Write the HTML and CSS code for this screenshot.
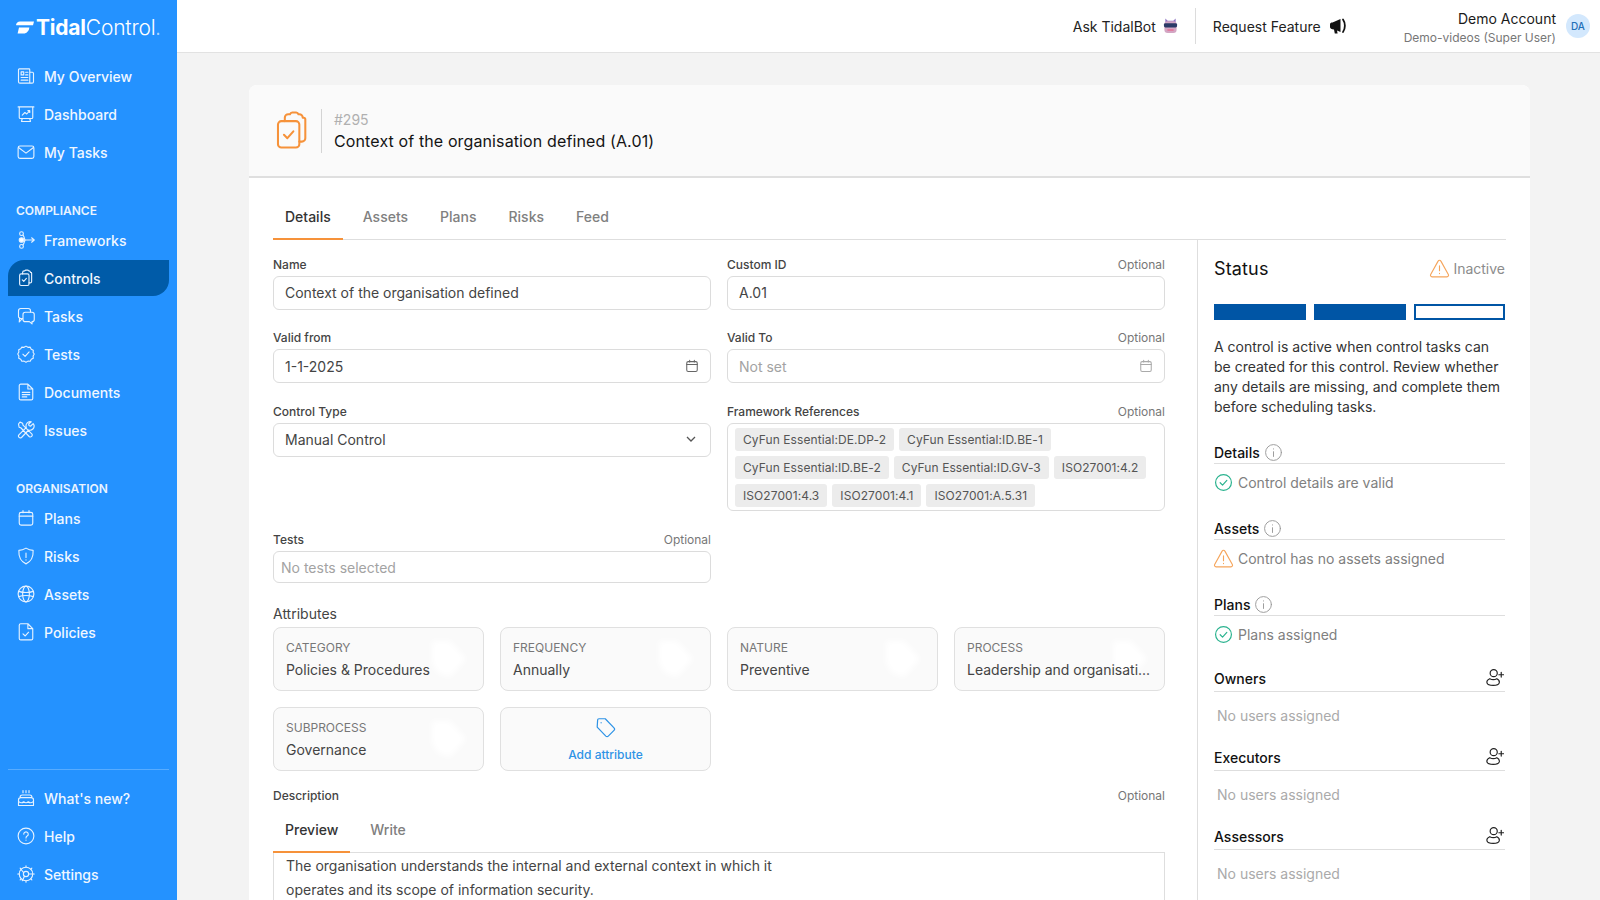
FILE: index.html
```html
<!DOCTYPE html>
<html lang="en">
<head>
    <meta charset="UTF-8">
    <title>Context of the organisation defined</title>
    <link rel="stylesheet" href="styles.css">
</head>
<body>
    <svg class="defs" width="0" height="0">
        <symbol id="i-clip" viewBox="0 0 24 24" fill="none" stroke="currentColor" stroke-linecap="round" stroke-linejoin="round">
            <path d="M7.500 6.500V4.500a2 2 0 0 1 2-2h1a1.600 1.600 0 0 1 1.400-1h2.200a1.600 1.600 0 0 1 1.400 1h.5a2 2 0 0 1 2 2V4.500h.5a1 1 0 0 1 1 1v11a2 2 0 0 1-2 2H16"/>
            <rect x="3.500" y="6.500" width="12.500" height="15.500" rx="2"/>
            <path d="M7 14.500l2 2 3.500-4"/>
        </symbol>
        <symbol id="i-warn" viewBox="0 0 24 24" fill="none" stroke="currentColor" stroke-linecap="round" stroke-linejoin="round">
            <path d="M10.400 3.600L1.900 18.800A1.800 1.800 0 0 0 3.500 21.500h17a1.800 1.800 0 0 0 1.600-2.700L13.600 3.600a1.800 1.800 0 0 0-3.200 0z"/>
            <path d="M12 9v5.500M12 17.600v.2"/>
        </symbol>
        <symbol id="i-ok" viewBox="0 0 24 24" fill="none" stroke="currentColor" stroke-linecap="round" stroke-linejoin="round">
            <circle cx="12" cy="12" r="10"/>
            <path d="M7.800 12.300l3 3 5.400-6"/>
        </symbol>
        <symbol id="i-info" viewBox="0 0 24 24" fill="none" stroke="currentColor" stroke-linecap="round">
            <circle cx="12" cy="12" r="10"/>
            <path d="M12 11v6M12 7.400v.2"/>
        </symbol>
        <symbol id="i-cal" viewBox="0 0 24 24" fill="none" stroke="currentColor" stroke-linecap="round" stroke-linejoin="round">
            <rect x="3" y="4.500" width="18" height="17" rx="2.500"/>
            <path d="M3 9.500h18M8 2v3M16 2v3"/>
        </symbol>
        <symbol id="i-adduser" viewBox="0 0 24 24" fill="none" stroke="currentColor" stroke-linecap="round" stroke-linejoin="round">
            <circle cx="11" cy="6.500" r="4.500"/>
            <path d="M15 13.500c2.600 1.200 3.500 3.200 3 5.300-.6 2.200-3.600 3.200-7.500 3.200s-7.500-1-8-3.200c-.5-2.300 1.100-4.300 3.500-5.300 2.500 1.300 6.500 1.300 9 0z"/>
            <path d="M20.500 5.500v6M17.500 8.500h6"/>
        </symbol>
        <symbol id="i-tag" viewBox="0 0 40 44">
            <path d="M4 4h18l16 18-16 18-12-4-6-10z"/>
        </symbol>
    </svg>

    <div class="app">
        <aside class="sidebar">
            <div class="logo">
                <svg class="logo_mark" viewBox="0 0 18 13" fill="#fff"><path d="M0 4Q.6.800 4 .6h14l-1 3.600H.4zM3 6.400h10.400Q12.800 11 8.600 12.600H1.600z"/></svg>
                <span class="logo_text"><b>Tidal</b>Control<i>.</i></span>
            </div>

            <a class="nav_item">
                <svg class="nav_icon" viewBox="0 0 24 24"><path d="M3 2.500h13a1 1 0 0 1 1 1V21.500H4a2 2 0 0 1-2-2v-16a1 1 0 0 1 1-1zM17 7h3.500a1.500 1.500 0 0 1 1.500 1.500v11a2 2 0 0 1-2 2h-3M5.500 6.500h3.500v4H5.500zM11.500 7h3M11.500 10.500h3M5.500 14h9M5.500 17.500h9"/></svg>
                My Overview
            </a>
            <a class="nav_item">
                <svg class="nav_icon" viewBox="0 0 24 24"><path d="M1.500 2.500h21M3 2.500v14a1.500 1.500 0 0 0 1.500 1.500h15a1.500 1.500 0 0 0 1.500-1.500v-14M7 18l-1 4M17 18l1 4M6 22h12M7 13.500l3.500-3.500 2.500 2 4-4.500M14.500 7.500H17V10"/></svg>
                Dashboard
            </a>
            <a class="nav_item">
                <svg class="nav_icon" viewBox="0 0 24 24"><rect x="1.500" y="4" width="21" height="16.500" rx="2.500"/><path d="M2 6l10 7.500L22 6"/></svg>
                My Tasks
            </a>

            <div class="nav_title">COMPLIANCE</div>
            <a class="nav_item">
                <svg class="nav_icon" viewBox="0 0 24 24"><circle cx="6" cy="3.500" r="2.500"/><circle cx="6" cy="12" r="3" fill="#fff"/><circle cx="6" cy="20.500" r="2.500"/><path d="M8 5.500c2 2.500 1.500 5 3 6.500M8 18.500c2-2.500 1.500-5 3-6.500M9 12h14M19.500 9l3.500 3-3.500 3"/></svg>
                Frameworks
            </a>
            <a class="nav_item active">
                <svg class="nav_icon" viewBox="0 0 24 24"><use href="#i-clip"/></svg>
                Controls
            </a>
            <a class="nav_item">
                <svg class="nav_icon" viewBox="0 0 24 24"><path d="M6 15.500H5a3 3 0 0 1-3-3V5a3 3 0 0 1 3-3h10a3 3 0 0 1 3 3v1.500"/><path d="M3.500 14.500L3 20l4-4.500M11 7h9a3 3 0 0 1 3 3v6.500a3 3 0 0 1-3 3v3l-3.500-3H11a3 3 0 0 1-3-3V10a3 3 0 0 1 3-3z"/></svg>
                Tasks
            </a>
            <a class="nav_item">
                <svg class="nav_icon" viewBox="0 0 24 24"><path d="M12 1.500l2.600 1.600 3-.2 1.400 2.700 2.700 1.400-.2 3L23 12l-1.500 2.600.2 3-2.700 1.400-1.400 2.700-3-.2L12 23l-2.600-1.500-3 .2L5 19l-2.700-1.400.2-3L1 12l1.500-2.600-.2-3L5 5l1.400-2.100 3 .2z"/><path d="M7.800 12.300l3 3 5.400-6"/></svg>
                Tests
            </a>
            <a class="nav_item">
                <svg class="nav_icon" viewBox="0 0 24 24"><path d="M5 1.500h9.500L21 8v12.500a2 2 0 0 1-2 2H5a2 2 0 0 1-2-2v-17a2 2 0 0 1 2-2zM14.500 1.500V8H21M7 12.500h10M7 15.500h10M7 18.500h6"/></svg>
                Documents
            </a>
            <a class="nav_item">
                <svg class="nav_icon" viewBox="0 0 24 24"><path d="M2 4l2-2.500 3.500 1.500.5 2.500L20 17.500a2.600 2.600 0 0 1-3.500 3.500L5 9 2.800 8.300zM21.500 3.500L18 7l-2-1-.5-2 3.500-3a5.500 5.500 0 0 0-6.500 7.500L2.500 18.500a2.500 2.500 0 0 0 3.500 3.500l9.500-10a5.500 5.500 0 0 0 7-7z"/></svg>
                Issues
            </a>

            <div class="nav_title">ORGANISATION</div>
            <a class="nav_item">
                <svg class="nav_icon" viewBox="0 0 24 24"><use href="#i-cal"/></svg>
                Plans
            </a>
            <a class="nav_item">
                <svg class="nav_icon" viewBox="0 0 24 24"><path d="M12 1.500c3 2 6 3 9.500 3 .5 8.500-2 14.500-9.500 18-7.500-3.500-10-9.500-9.500-18 3.500 0 6.500-1 9.500-3zM12 8v6M12 17v.2"/></svg>
                Risks
            </a>
            <a class="nav_item">
                <svg class="nav_icon" viewBox="0 0 24 24"><circle cx="12" cy="12" r="10.500"/><ellipse cx="12" cy="12" rx="4.500" ry="10.500"/><path d="M2.500 8.500c5 2 14 2 19 0M2.500 15.500c5-2 14-2 19 0"/></svg>
                Assets
            </a>
            <a class="nav_item">
                <svg class="nav_icon" viewBox="0 0 24 24"><path d="M5 1h9.500L21 7.500v13a2 2 0 0 1-2 2H5a2 2 0 0 1-2-2V3a2 2 0 0 1 2-2zM14.500 1v6.500H21M8 14.500l3 2.800 4.500-5"/></svg>
                Policies
            </a>

            <div class="sidebar_foot">
                <a class="nav_item">
                    <svg class="nav_icon" viewBox="0 0 24 24"><path d="M2 14.500c0-2 1-3 3-3h14c2 0 3 1 3 3v7.500H2zM4 11.500c0-2 1-3.500 3-3.500h10c2 0 3 1.500 3 3.500M2 16.500c3 2.500 5 2.500 7 .5 1.500 1.500 4.500 1.500 6 0 2 2 4 2 7-.5M8 2v3M12 2v3M16 2v3"/></svg>
                    What's new?
                </a>
                <a class="nav_item">
                    <svg class="nav_icon" viewBox="0 0 24 24"><circle cx="12" cy="12" r="10.500"/><path d="M9 9.500a3 3 0 1 1 4.500 2.600c-1 .6-1.500 1.200-1.500 2.400M12 17.500v.2"/></svg>
                    Help
                </a>
                <a class="nav_item">
                    <svg class="nav_icon" viewBox="0 0 24 24"><circle cx="12" cy="12" r="9"/><circle cx="12" cy="12" r="3.500"/><path d="M12 1v2M12 21v2M1 12h2M21 12h2M4.200 4.200l1.500 1.500M18.300 18.300l1.500 1.500M4.200 19.800l1.500-1.500M18.300 5.700l1.500-1.500M8.700 10l-4-5M15.500 12h5.500M10 15l-3 6"/></svg>
                    Settings
                </a>
            </div>
        </aside>

        <div class="main">
            <header class="topbar">
                <div class="top_link">
                    Ask TidalBot
                    <svg class="bot_icon" viewBox="0 0 16 16"><path d="M2.500 0l2.500 2.500h6L13.500 0v4h-11z" fill="#8f74c4"/><rect x="1.500" y="3" width="13" height="12.500" rx="3.500" fill="#d3a6c4"/><rect x="1" y="5" width="14" height="4.500" rx="1.500" fill="#2b3a67"/><rect x="4.500" y="11.500" width="7" height="1.500" rx=".7" fill="#e56f92"/></svg>
                </div>
                <div class="top_sep"></div>
                <div class="top_link request">
                    Request Feature
                    <svg class="horn_icon" viewBox="0 0 16 16"><path d="M0 6.500C0 5 1 4.500 2.500 4.500L10.500 1v13L7 12.500l.6 3H4.800L4 11.500C1.500 11.500 0 10.500 0 9z" fill="#111"/><path d="M13 1.500c2.500 3.500 2.500 9 0 12.500" fill="none" stroke="#111" stroke-width="1.800" stroke-linecap="round"/></svg>
                </div>
                <div class="account">
                    <div class="account_name">Demo Account</div>
                    <div class="account_org">Demo-videos (Super User)</div>
                </div>
                <div class="avatar">DA</div>
            </header>

            <div class="content">
                <section class="card">
                    <div class="card_head">
                        <svg class="head_icon"><use href="#i-clip"/></svg>
                        <div class="head_text">
                            <div class="head_num">#295</div>
                            <div class="head_title">Context of the organisation defined (A.01)</div>
                        </div>
                    </div>

                    <div class="tabs">
                        <span class="tab current">Details</span>
                        <span class="tab">Assets</span>
                        <span class="tab">Plans</span>
                        <span class="tab">Risks</span>
                        <span class="tab">Feed</span>
                    </div>

                    <div class="card_body">
                        <div class="form">
                            <div class="field">
                                <div class="label"><span>Name</span></div>
                                <div class="input lift">Context of the organisation defined</div>
                            </div>
                            <div class="field">
                                <div class="label"><span>Custom ID</span><em>Optional</em></div>
                                <div class="input lift">A.01</div>
                            </div>
                            <div class="field">
                                <div class="label"><span>Valid from</span></div>
                                <div class="input">1-1-2025<svg class="cal"><use href="#i-cal"/></svg></div>
                            </div>
                            <div class="field">
                                <div class="label"><span>Valid To</span><em>Optional</em></div>
                                <div class="input muted">Not set<svg class="cal faded"><use href="#i-cal"/></svg></div>
                            </div>
                            <div class="field lower">
                                <div class="label"><span>Control Type</span></div>
                                <div class="input lift">Manual Control<svg class="chev" viewBox="0 0 12 12"><path d="M2 4l4 4 4-4"/></svg></div>
                            </div>
                            <div class="field lower">
                                <div class="label"><span>Framework References</span><em>Optional</em></div>
                                <div class="tag_box">
                                    <span class="tag">CyFun Essential:DE.DP-2</span>
                                    <span class="tag">CyFun Essential:ID.BE-1</span>
                                    <span class="tag">CyFun Essential:ID.BE-2</span>
                                    <span class="tag">CyFun Essential:ID.GV-3</span>
                                    <span class="tag">ISO27001:4.2</span>
                                    <span class="tag">ISO27001:4.3</span>
                                    <span class="tag">ISO27001:4.1</span>
                                    <span class="tag">ISO27001:A.5.31</span>
                                </div>
                            </div>
                            <div class="field tests">
                                <div class="label"><span>Tests</span><em>Optional</em></div>
                                <div class="input small muted">No tests selected</div>
                            </div>

                            <div class="attributes">
                                <div class="attr_title">Attributes</div>
                                <div class="attr_grid">
                                    <div class="attr">
                                        <svg class="attr_mark"><use href="#i-tag"/></svg>
                                        <div class="attr_key">CATEGORY</div>
                                        <div class="attr_val">Policies &amp; Procedures</div>
                                    </div>
                                    <div class="attr">
                                        <svg class="attr_mark"><use href="#i-tag"/></svg>
                                        <div class="attr_key">FREQUENCY</div>
                                        <div class="attr_val">Annually</div>
                                    </div>
                                    <div class="attr">
                                        <svg class="attr_mark"><use href="#i-tag"/></svg>
                                        <div class="attr_key">NATURE</div>
                                        <div class="attr_val">Preventive</div>
                                    </div>
                                    <div class="attr">
                                        <svg class="attr_mark"><use href="#i-tag"/></svg>
                                        <div class="attr_key">PROCESS</div>
                                        <div class="attr_val">Leadership and organisati...</div>
                                    </div>
                                    <div class="attr">
                                        <svg class="attr_mark"><use href="#i-tag"/></svg>
                                        <div class="attr_key">SUBPROCESS</div>
                                        <div class="attr_val">Governance</div>
                                    </div>
                                    <div class="attr add">
                                        <svg class="add_icon" viewBox="0 0 24 24"><path d="M3 3.500A1.500 1.500 0 0 1 4.500 2h7.200l10 10.500a2 2 0 0 1 0 2.800l-6.500 6.500a2 2 0 0 1-2.800 0L2.500 11.500zM7 6.500v.2"/></svg>
                                        <div class="add_text">Add attribute</div>
                                    </div>
                                </div>
                            </div>

                            <div class="description">
                                <div class="label"><span>Description</span><em>Optional</em></div>
                                <div class="tabs inner">
                                    <span class="tab current">Preview</span>
                                    <span class="tab">Write</span>
                                </div>
                                <div class="desc_box">
                                    <p>The organisation understands the internal and external context in which it operates and its scope of information security.</p>
                                </div>
                            </div>
                        </div>

                        <aside class="status">
                            <div class="status_head">
                                <h2>Status</h2>
                                <div class="status_state"><svg class="warn"><use href="#i-warn"/></svg>Inactive</div>
                            </div>
                            <div class="bars">
                                <span class="bar"></span>
                                <span class="bar"></span>
                                <span class="bar empty"></span>
                            </div>
                            <p class="status_text">A control is active when control tasks can be created for this control. Review whether any details are missing, and complete them before scheduling tasks.</p>

                            <div class="check">
                                <div class="check_head">Details<svg class="info"><use href="#i-info"/></svg></div>
                                <div class="check_row"><svg class="ok"><use href="#i-ok"/></svg>Control details are valid</div>
                            </div>
                            <div class="check">
                                <div class="check_head">Assets<svg class="info"><use href="#i-info"/></svg></div>
                                <div class="check_row"><svg class="warn"><use href="#i-warn"/></svg>Control has no assets assigned</div>
                            </div>
                            <div class="check">
                                <div class="check_head">Plans<svg class="info"><use href="#i-info"/></svg></div>
                                <div class="check_row"><svg class="ok"><use href="#i-ok"/></svg>Plans assigned</div>
                            </div>

                            <div class="people first">
                                <div class="people_head">Owners<svg class="adduser"><use href="#i-adduser"/></svg></div>
                                <div class="people_none">No users assigned</div>
                            </div>
                            <div class="people">
                                <div class="people_head">Executors<svg class="adduser"><use href="#i-adduser"/></svg></div>
                                <div class="people_none">No users assigned</div>
                            </div>
                            <div class="people">
                                <div class="people_head">Assessors<svg class="adduser"><use href="#i-adduser"/></svg></div>
                                <div class="people_none">No users assigned</div>
                            </div>
                        </aside>
                    </div>
                </section>
            </div>
        </div>
    </div>
</body>
</html>
```

FILE: styles.css
```css
*{
    box-sizing: border-box;
}
html, body{
    margin: 0;
    height: 100%;
    overflow: hidden;
}
body{
    font-family: Inter, "Noto Sans", sans-serif;
    font-size: 14px;
    color: #111;
    background: #f3f3f3;
}
.defs{
    position: absolute;
}
.app{
    display: flex;
    height: 900px;
    overflow: hidden;
}

/* sidebar */
.sidebar{
    width: 177px;
    flex: none;
    display: flex;
    flex-direction: column;
    padding: 0 8px 6px;
    background: #2492ff;
    color: #fff;
}
.logo{
    height: 58px;
    margin-left: 8px;
    padding-top: 19px;
    display: flex;
    align-items: flex-start;
    gap: 2px;
}
.logo_mark{
    width: 18px;
    height: 13px;
    margin-top: 2px;
}
.logo_text{
    font-size: 21px;
    line-height: 17px;
    font-weight: 300;
    letter-spacing: -0.2px;
    white-space: nowrap;
}
.logo_text b{
    font-weight: 700;
}
.logo_text i{
    font-style: normal;
    opacity: .6;
}
.nav_item{
    height: 36px;
    margin-bottom: 2px;
    padding-left: 9px;
    display: flex;
    align-items: center;
    gap: 9px;
    font-weight: 500;
    font-size: 14px;
    color: #f0f7ff;
}
.nav_item.active{
    background: #005ba8;
    border-radius: 16px 0 16px 0;
}
.nav_icon{
    width: 18px;
    height: 18px;
    flex: none;
    fill: none;
    stroke: #e6f2ff;
    color: #e6f2ff;
    stroke-width: 1.500;
    stroke-linecap: round;
    stroke-linejoin: round;
}
.nav_title{
    margin: 31px 0 3px 8px;
    line-height: 16px;
    font-size: 12px;
    font-weight: 600;
    color: #eaf4ff;
}
.sidebar_foot{
    margin-top: auto;
    padding-top: 10px;
    border-top: 1px solid #58acff;
}

/* top bar */
.main{
    flex: 1;
    min-width: 0;
    display: flex;
    flex-direction: column;
}
.topbar{
    height: 53px;
    flex: none;
    display: flex;
    align-items: center;
    padding-right: 10px;
    background: #fff;
    border-bottom: 1px solid #e2e2e2;
}
.top_link{
    display: flex;
    align-items: center;
    gap: 7px;
    margin-left: auto;
    font-size: 14px;
    color: #222;
}
.top_link.request{
    margin-left: 17px;
    gap: 9px;
}
.bot_icon{
    width: 15px;
    height: 16px;
}
.horn_icon{
    width: 16px;
    height: 16px;
}
.top_sep{
    width: 1px;
    height: 36px;
    margin-left: 17px;
    background: #dcdcdc;
}
.account{
    margin-left: 58px;
    margin-top: 5px;
    text-align: right;
}
.account_name{
    font-size: 14px;
    line-height: 18px;
    color: #1a1a1a;
}
.account_org{
    font-size: 12px;
    line-height: 19px;
    color: #777;
}
.avatar{
    width: 24px;
    height: 24px;
    margin-left: 10px;
    border-radius: 50%;
    background: #d3e8fd;
    color: #1f6fb8;
    font-size: 10px;
    font-weight: 500;
    display: flex;
    align-items: center;
    justify-content: center;
}

/* main card */
.content{
    flex: 1;
    padding: 32px 70px 0 72px;
}
.card{
    height: 900px;
    background: #fff;
    border-radius: 8px 8px 0 0;
}
.card_head{
    height: 93px;
    padding-left: 23px;
    display: flex;
    align-items: center;
    background: #fafafa;
    border-bottom: 2px solid #dfdfdf;
    border-radius: 8px 8px 0 0;
}
.head_icon{
    width: 41px;
    height: 41px;
    margin-right: 8px;
    color: #f6923a;
    stroke-width: 1.200;
}
.head_text{
    height: 44px;
    padding: 1px 0 0 12px;
    border-left: 1px solid #d4d4d4;
}
.head_num{
    font-size: 14px;
    line-height: 20px;
    color: #b0b0b0;
}
.head_title{
    font-size: 16px;
    line-height: 22px;
    letter-spacing: .12px;
    color: #141414;
}
.tabs{
    height: 62px;
    margin: 0 24px;
    padding-top: 29px;
    display: flex;
    gap: 8px;
    border-bottom: 1px solid #dedede;
}
.tab{
    height: 33px;
    padding: 0 12px;
    line-height: 20px;
    font-size: 14px;
    font-weight: 500;
    color: #808080;
}
.tab.current{
    color: #333;
    border-bottom: 2px solid #f6923a;
}
.card_body{
    display: flex;
    margin: 0 24px;
}

/* form */
.form{
    width: 924px;
    flex: none;
    padding: 17px 32px 0 0;
    display: grid;
    grid-template-columns: 438px 438px;
    column-gap: 16px;
    row-gap: 20px;
    align-content: start;
}
.field{
    min-width: 0;
}
.field.lower{
    margin-top: 1px;
}
.label{
    height: 19px;
    display: flex;
    justify-content: space-between;
    align-items: flex-start;
    line-height: 16px;
    font-size: 12px;
}
.label span{
    font-weight: 500;
    color: #444;
}
.label em{
    font-style: normal;
    color: #777;
}
.input{
    height: 34px;
    padding: 0 11px;
    display: flex;
    align-items: center;
    justify-content: space-between;
    border: 1px solid #dcdcdc;
    border-radius: 6px;
    font-size: 14px;
    color: #444;
}
.input.lift{
    padding-bottom: 2px;
}
.input.muted{
    color: #a3a3a3;
}
.input.small{
    height: 32px;
    padding: 0 7px;
}
.cal{
    width: 14px;
    height: 14px;
    color: #666;
    stroke-width: 1.800;
}
.cal.faded{
    color: #aaa;
}
.chev{
    width: 12px;
    height: 12px;
    margin-right: 2px;
    fill: none;
    stroke: #555;
    stroke-width: 1.300;
}
.tag_box{
    height: 88px;
    padding: 4px 7px;
    display: flex;
    flex-wrap: wrap;
    align-content: flex-start;
    gap: 5px;
    border: 1px solid #dcdcdc;
    border-radius: 6px;
}
.tag{
    height: 23px;
    padding: 0 8px;
    line-height: 23px;
    border-radius: 3px;
    background: #ececec;
    font-size: 12px;
    letter-spacing: .08px;
    color: #555;
    white-space: nowrap;
}
.tests{
    grid-column: 1;
    margin-top: 1px;
}
.attributes{
    grid-column: 1 / 3;
    margin-top: 1px;
}
.attr_title{
    height: 23px;
    line-height: 20px;
    font-size: 14px;
    color: #444;
}
.attr_grid{
    display: grid;
    grid-template-columns: repeat(4, 211px);
    gap: 16px;
}
.attr{
    position: relative;
    height: 64px;
    padding: 12px 12px;
    border: 1px solid #e0e0e0;
    border-radius: 8px;
    background: #fafafa;
    overflow: hidden;
}
.attr_mark{
    position: absolute;
    top: 9px;
    right: 15px;
    width: 40px;
    height: 44px;
    fill: #fff;
    filter: blur(3px);
}
.attr_key{
    position: relative;
    line-height: 16px;
    font-size: 12px;
    color: #777;
}
.attr_val{
    position: relative;
    margin-top: 5px;
    line-height: 18px;
    font-size: 14px;
    color: #444;
    white-space: nowrap;
}
.attr.add{
    display: flex;
    flex-direction: column;
    align-items: center;
    padding: 9px 0 0;
}
.add_icon{
    width: 21px;
    height: 21px;
    fill: none;
    stroke: #2e93e6;
    stroke-width: 1.400;
    stroke-linejoin: round;
    stroke-linecap: round;
}
.add_text{
    margin-top: 9px;
    line-height: 16px;
    font-size: 12px;
    font-weight: 500;
    color: #2e93e6;
}
.description{
    grid-column: 1 / 3;
    margin-top: -3px;
}
.tabs.inner{
    height: 46px;
    margin: 0;
    padding-top: 13px;
}
.desc_box{
    height: 60px;
    padding: 1px 12px;
    border: 1px solid #dedede;
    border-top: 0;
}
.desc_box p{
    max-width: 500px;
    margin: 0;
    line-height: 24px;
    font-size: 14px;
    color: #444;
}

/* status column */
.status{
    width: 308px;
    flex: none;
    padding: 15px 0 0 16px;
    border-left: 1px solid #dedede;
    height: 700px;
}
.status_head{
    height: 26px;
    display: flex;
    justify-content: space-between;
    align-items: center;
}
.status_head h2{
    margin: 0;
    font-size: 18px;
    font-weight: 400;
    letter-spacing: .15px;
    color: #111;
}
.status_state{
    display: flex;
    align-items: center;
    gap: 3px;
    font-size: 14px;
    color: #8c8c8c;
}
.warn{
    width: 21px;
    height: 21px;
    color: #f5a55c;
    stroke-width: 1.300;
}
.bars{
    margin-top: 23px;
    display: flex;
    gap: 8px;
}
.bar{
    width: 92px;
    height: 16px;
    background: #0055a5;
    border: 2px solid #0055a5;
}
.bar.empty{
    width: 91px;
    background: #fff;
}
.status_text{
    margin: 17px 0 0;
    line-height: 20px;
    font-size: 14px;
    color: #333;
}
.check{
    margin-top: 19px;
}
.status_text + .check{
    margin-top: 26px;
}
.check_head{
    height: 21px;
    padding-bottom: 2px;
    display: flex;
    align-items: center;
    gap: 4px;
    border-bottom: 1px solid #dedede;
    font-size: 14px;
    font-weight: 500;
    color: #111;
}
.info{
    width: 19px;
    height: 19px;
    color: #999;
    stroke-width: 1.200;
}
.check_row{
    height: 36px;
    display: flex;
    align-items: center;
    gap: 5px;
    font-size: 14px;
    color: #808080;
}
.check_row .warn{
    margin-left: -1px;
    margin-right: -1px;
}
.ok{
    width: 19px;
    height: 19px;
    color: #2bb38f;
    stroke-width: 1.500;
}
.people.first{
    margin-top: 15px;
}
.people_head{
    height: 25px;
    padding-bottom: 2px;
    display: flex;
    justify-content: space-between;
    align-items: center;
    border-bottom: 1px solid #dedede;
    font-size: 14px;
    font-weight: 500;
    color: #111;
}
.adduser{
    width: 19px;
    height: 19px;
    margin: -2px 1px 0 0;
    color: #222;
    stroke-width: 1.500;
}
.people_none{
    height: 54px;
    padding: 14px 3px 0;
    line-height: 20px;
    font-size: 14px;
    color: #aaa;
}
```
